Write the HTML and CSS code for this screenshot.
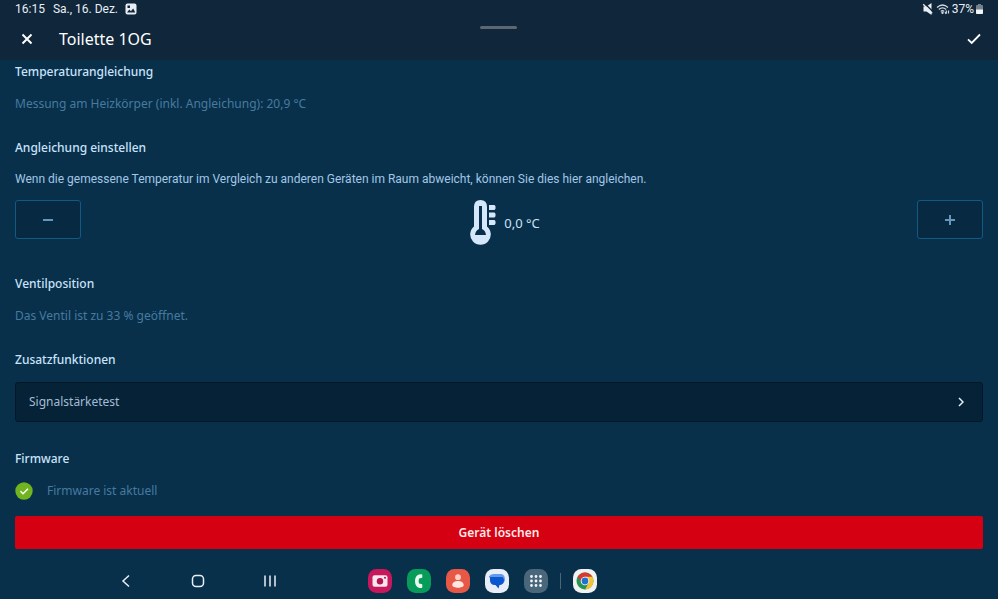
FILE: index.html
```html
<!DOCTYPE html>
<html lang="de">
<head>
<meta charset="utf-8">
<meta name="viewport" content="width=device-width, initial-scale=1">
<title>Toilette 1OG</title>
<link rel="stylesheet" href="styles.css">
</head>
<body>
<header class="top">
  <div class="status">
    <span class="clock">16:15</span>
    <span>Sa., 16. Dez.</span>
    <svg class="picture" viewBox="0 0 12 12" width="12" height="12"><rect x=".5" y=".5" width="11" height="11" rx="2" fill="#e8eef4"/><path d="M2 9.500l2.300-3 1.600 1.700L8.200 5.500 10.300 9.500z" fill="#10263a"/><rect x="2.500" y="2.500" width="2.500" height="2.500" fill="#10263a"/></svg>
    <span class="indicators">
      <svg class="mute" viewBox="0 0 12 12" width="12" height="12"><path d="M1.500 3.500H4.500L9.500 0v12L4.500 8.500H1.500z" fill="#e8eef4"/><path d="M2-.200l10.200 10.200" stroke="#10263a" stroke-width="1.500"/><path d="M1.200 1.200l9 9" stroke="#e8eef4" stroke-width="1.300"/></svg>
      <svg viewBox="0 0 14 12" width="14" height="12" fill="none" stroke="#d3dce5" stroke-width="1.200"><path d="M1 4.500Q6.500-.5 12 4.500M2.800 6.500q3.700-3.300 7.400 0M4.700 8.400q1.800-1.500 3.600 0"/><circle cx="6.500" cy="9.800" r=".6"/><path d="M10.300 7.500v3M8.900 9.300l1.400 1.500M12.500 7.500v3"/></svg>
      <span class="charge">37%</span>
      <svg viewBox="0 0 7 10" width="7" height="10"><path d="M2 0h3v1h1q1 0 1 1v7q0 1-1 1H1q-1 0-1-1V2q0-1 1-1h1z" fill="#75818d"/><path d="M0 5.500h7V9q0 1-1 1H1q-1 0-1-1z" fill="#f2f5f8"/></svg>
    </span>
  </div>
  <div class="titlebar">
    <button class="icon-button" aria-label="Schließen"><svg viewBox="0 0 12 12" width="12" height="12"><path d="M1.500 1.500l9 9M10.500 1.500l-9 9" stroke="#fff" stroke-width="2"/></svg></button>
    <h1>Toilette 1OG</h1>
    <button class="icon-button confirm" aria-label="Speichern"><svg viewBox="0 0 14 12" width="14" height="12"><path d="M1 6.300l3.700 3.700L13 1.500" fill="none" stroke="#fff" stroke-width="1.800"/></svg></button>
  </div>
  <span class="handle"></span>
</header>
<main>
  <section>
    <h2>Temperaturangleichung</h2>
    <p class="muted">Messung am Heizkörper (inkl. Angleichung): 20,9 °C</p>
  </section>
  <section class="adjust">
    <h2>Angleichung einstellen</h2>
    <p class="description">Wenn die gemessene Temperatur im Vergleich zu anderen Geräten im Raum abweicht, können Sie dies hier angleichen.</p>
    <div class="stepper">
      <button class="step" aria-label="Verringern"><svg viewBox="0 0 10 10" width="10" height="10"><path d="M0 5h10" stroke="#6796bd" stroke-width="2"/></svg></button>
      <div class="reading">
        <svg viewBox="0 0 26 46" width="26" height="46"><path d="M4 7q0-7 6.500-7T17 7v19.500a10.300 10.300 0 1 1-13 0z" fill="#d5e8fb"/><path d="M9 6h3v23q3.500 1.500 4 6H5q.5-4.500 4-6z" fill="#08304b"/><path d="M19 5h5.500l1 1.200v2.600l-1 1.200H19zM19 12.500h5.500l1 1.200v2.600l-1 1.200H19zM19 20h5.500l1 1.200v2.600l-1 1.200H19z" fill="#d5e8fb"/></svg>
        <output>0,0 °C</output>
      </div>
      <button class="step" aria-label="Erhöhen"><svg viewBox="0 0 10 10" width="10" height="10"><path d="M0 5h10M5 0v10" stroke="#6796bd" stroke-width="2"/></svg></button>
    </div>
  </section>
  <section>
    <h2>Ventilposition</h2>
    <p class="muted">Das Ventil ist zu 33 % geöffnet.</p>
  </section>
  <section class="extras">
    <h2>Zusatzfunktionen</h2>
    <a class="card" href="#signal">Signalstärketest<svg viewBox="0 0 6 10" width="6" height="10"><path d="M1 1l4 4-4 4" fill="none" stroke="#e1effb" stroke-width="1.500"/></svg></a>
  </section>
  <section>
    <h2>Firmware</h2>
    <p class="muted firmware"><svg viewBox="0 0 18 18" width="18" height="18"><circle cx="9" cy="9" r="8.700" fill="#70b51f"/><path d="M5.500 9.300l2.500 2.400 5-5" fill="none" stroke="#fff" stroke-width="1.500"/></svg>Firmware ist aktuell</p>
  </section>
  <button class="delete">Gerät löschen</button>
</main>
<nav>
  <div class="system">
    <button aria-label="Zurück"><svg viewBox="0 0 14 14" width="14" height="14"><path d="M10 1.500L4 7l6 5.500"/></svg></button>
    <button aria-label="Startbildschirm"><svg viewBox="0 0 14 14" width="14" height="14"><rect x="1.500" y="1.500" width="11" height="11" rx="3.500"/></svg></button>
    <button aria-label="Letzte Apps"><svg viewBox="0 0 14 14" width="14" height="14"><path d="M2 1.500v11M7 1.500v11M12 1.500v11"/></svg></button>
  </div>
  <div class="apps">
    <button aria-label="Kamera"><svg viewBox="0 0 24 24"><rect width="24" height="24" rx="8.500" fill="#c9175b"/><rect x="4.500" y="6.300" width="15" height="11.500" rx="2" fill="#f8e5ed"/><circle cx="12" cy="12.200" r="3.200" fill="#b5124e"/><circle cx="17" cy="8.800" r="1" fill="#b5124e"/></svg></button>
    <button aria-label="Telefon"><svg viewBox="0 0 24 24"><rect width="24" height="24" rx="8.500" fill="#089c5b"/><path d="M14.500 5.200c-4.500-.4-6.500 3-6.500 7s2.500 7.300 6.500 6.800q.8-.1.800-.9v-2.400q0-.7-.8-.8l-1.700-.2c-1.500-.5-1.500-5 0-5.500l1.700-.2q.8-.1.800-.8V6q0-.8-.8-.8z" fill="#e8f9ef"/></svg></button>
    <button aria-label="Kontakte"><svg viewBox="0 0 24 24"><rect width="24" height="24" rx="8.500" fill="#e75847"/><circle cx="12" cy="8.200" r="2.900" fill="#ffd2c8"/><path d="M6.300 16c0-5.200 11.400-5.200 11.400 0 0 3.600-11.400 3.600-11.400 0z" fill="#ffe8df"/></svg></button>
    <button aria-label="Nachrichten"><svg viewBox="0 0 24 24"><rect width="24" height="24" rx="8.500" fill="#e8eef9"/><rect x="7" y="5" width="13" height="10.500" rx="5.200" fill="#6398ec"/><path d="M9.500 7h5a4.500 4.500 0 0 1 0 9l-1 3.500-3-3.500h-1a4.500 4.500 0 0 1-4.500-4.500V10q0-1.500-1-3z" fill="#0b57d0"/><path d="M4 8q1-3 5-3h7q2.500 0 3.600 3H4z" fill="#6398ec"/></svg></button>
    <button aria-label="Alle Apps"><svg viewBox="0 0 24 24"><rect width="24" height="24" rx="8.500" fill="#49667b"/><path d="M7.500 7.500h10M7.500 12h10M7.500 16.500h10" stroke="#eef4f8" stroke-width="2.800" stroke-linecap="round" stroke-dasharray="0 4.500"/></svg></button>
    <span class="divider"></span>
    <button aria-label="Chrome"><svg viewBox="0 0 24 24"><rect width="24" height="24" rx="8.500" fill="#f0f2f3"/><circle cx="12" cy="12" r="8.500" fill="#249653"/><path d="M12 12L4.640 7.750A8.500 8.500 0 0 1 19.360 7.750z" fill="#d93830"/><path d="M12 7.750h7.360A8.500 8.500 0 0 1 12 20.500l3.700-6.400z" fill="#f6c332"/><path d="M4.640 7.750L8.300 14.100 12 8z" fill="#d93830"/><path d="M4.640 7.750L12 20.500l2-4.500-6-4z" fill="#249653"/><circle cx="12" cy="12" r="4.300" fill="#fff"/><circle cx="12" cy="12" r="3.400" fill="#2170d4"/></svg></button>
  </div>
</nav>
</body>
</html>
```

FILE: styles.css
```css
* { box-sizing: border-box; }
body {
  margin: 0;
  min-height: 100vh;
  background: #08304b;
  color: #c9e0f5;
  font: 12px/20px "Noto Sans", sans-serif;
}
h1, h2, p { margin: 0; }
svg { display: block; flex: none; }
button { margin: 0; padding: 0; border: 0; background: none; color: inherit; font: inherit; }

.top { position: relative; background: #10263a; color: #fff; }
.status {
  display: flex;
  align-items: center;
  height: 18px;
  padding: 0 15px;
  color: #e8eef4;
  font: 12px/18px Roboto, sans-serif;
}
.clock { margin-right: 8px; }
.picture { margin-left: 7px; }
.indicators { display: flex; align-items: center; gap: 2px; margin-left: auto; }
.titlebar { display: flex; align-items: center; height: 42px; padding: 0 12px 0 15px; }
.icon-button { display: grid; place-items: center; width: 24px; height: 24px; }
.confirm { margin-left: auto; }
h1 { margin-left: 20px; font-size: 16px; font-weight: 400; }
.handle {
  position: absolute;
  top: 26px;
  left: 50%;
  width: 37px;
  height: 3px;
  margin-left: -19px;
  border-radius: 2px;
  background: #5b6873;
}

main { padding: 2px 15px 0; }
section { display: flex; flex-direction: column; gap: 12px; margin-bottom: 24px; }
h2 { font-size: 12px; font-weight: 500; color: #c9e3fa; }
.muted { color: #477a9f; }
.description { color: #a3c7e5; font-family: Roboto, sans-serif; }
.adjust { gap: 11px; margin-bottom: 35px; }
.stepper { display: flex; justify-content: space-between; height: 39px; }
.step {
  display: grid;
  place-items: center;
  width: 66px;
  border: 1px solid #125a86;
  border-radius: 3px;
  background: #082942;
}
.reading {
  display: flex;
  align-items: center;
  gap: 8px;
  height: 46px;
  padding-left: 12px;
  font-size: 13px;
}
.extras { margin-bottom: 27px; }
.card {
  display: flex;
  align-items: center;
  justify-content: space-between;
  height: 40px;
  padding: 0 18px 0 13px;
  border: 1px solid #03172b;
  border-radius: 3px;
  background: #062237;
  color: #a3bcd4;
  text-decoration: none;
}
.firmware { display: flex; align-items: center; gap: 14px; }
section:last-of-type { margin-bottom: 15px; }
.delete {
  display: block;
  width: 100%;
  height: 33px;
  border-radius: 2px;
  background: #d50012;
  color: #ffe9e9;
  font-weight: 600;
}

nav { display: flex; align-items: center; gap: 86px; padding: 20px 0 0 114px; }
.system { display: flex; gap: 48px; }
.system button { display: grid; place-items: center; width: 24px; height: 24px; }
.system svg { fill: none; stroke: #e8eef4; stroke-width: 1.5; }
.apps { display: flex; align-items: center; gap: 15px; }
.apps button, .apps svg { width: 24px; height: 24px; }
.divider { width: 1px; height: 16px; margin: 0 -3px; background: #49667b; }
```
